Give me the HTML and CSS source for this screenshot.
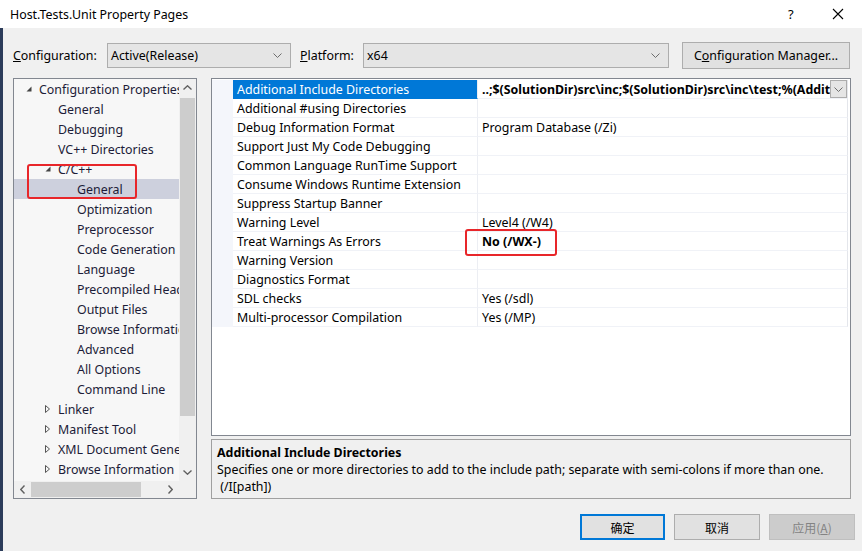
FILE: index.html
```html
<!DOCTYPE html>
<html>
<head>
<meta charset="utf-8">
<title>Host.Tests.Unit Property Pages</title>
<link rel="stylesheet" href="styles.css">
</head>
<body>
<div class="dialog">
  <div class="titlebar">
    <span class="title">Host.Tests.Unit Property Pages</span>
    <span class="tb-help">?</span>
    <span class="tb-close"><svg width="12" height="12" viewBox="0 0 12 12"><path d="M1 1L11 11M11 1L1 11" stroke="#000" stroke-width="1.1" fill="none"/></svg></span>
  </div>
  <div class="content">
    <div class="toolbar">
      <span class="lbl lbl-config"><u>C</u>onfiguration:</span>
      <div class="combo combo-config"><span>Active(Release)</span><svg class="chev" width="9" height="5" viewBox="0 0 9 5"><path d="M0.5 0.5L4.5 4.5L8.5 0.5" stroke="#6d6d6d" fill="none"/></svg></div>
      <span class="lbl lbl-platform"><u>P</u>latform:</span>
      <div class="combo combo-platform"><span>x64</span><svg class="chev" width="9" height="5" viewBox="0 0 9 5"><path d="M0.5 0.5L4.5 4.5L8.5 0.5" stroke="#6d6d6d" fill="none"/></svg></div>
      <div class="btn btn-manager">C<u>o</u>nfiguration Manager...</div>
    </div>
    <div class="main">
      <div class="tree">
        <div class="tree-items">
          <div class="ti l0"><span class="arr"><svg width="6" height="6" viewBox="0 0 6 6"><path d="M5.5 0.5V5.5H0.5Z" fill="#444"/></svg></span>Configuration Properties</div>
          <div class="ti l1"><span class="arr"></span>General</div>
          <div class="ti l1"><span class="arr"></span>Debugging</div>
          <div class="ti l1"><span class="arr"></span>VC++ Directories</div>
          <div class="ti l1"><span class="arr"><svg width="6" height="6" viewBox="0 0 6 6"><path d="M5.5 0.5V5.5H0.5Z" fill="#444"/></svg></span>C/C++</div>
          <div class="ti l2 sel"><span class="arr"></span>General</div>
          <div class="ti l2"><span class="arr"></span>Optimization</div>
          <div class="ti l2"><span class="arr"></span>Preprocessor</div>
          <div class="ti l2"><span class="arr"></span>Code Generation</div>
          <div class="ti l2"><span class="arr"></span>Language</div>
          <div class="ti l2"><span class="arr"></span>Precompiled Headers</div>
          <div class="ti l2"><span class="arr"></span>Output Files</div>
          <div class="ti l2"><span class="arr"></span>Browse Information</div>
          <div class="ti l2"><span class="arr"></span>Advanced</div>
          <div class="ti l2"><span class="arr"></span>All Options</div>
          <div class="ti l2"><span class="arr"></span>Command Line</div>
          <div class="ti l1"><span class="arr"><svg width="5" height="8" viewBox="0 0 5 8"><path d="M0.5 0.5L4.5 4L0.5 7.5Z" stroke="#555" fill="none"/></svg></span>Linker</div>
          <div class="ti l1"><span class="arr"><svg width="5" height="8" viewBox="0 0 5 8"><path d="M0.5 0.5L4.5 4L0.5 7.5Z" stroke="#555" fill="none"/></svg></span>Manifest Tool</div>
          <div class="ti l1"><span class="arr"><svg width="5" height="8" viewBox="0 0 5 8"><path d="M0.5 0.5L4.5 4L0.5 7.5Z" stroke="#555" fill="none"/></svg></span>XML Document Generator</div>
          <div class="ti l1"><span class="arr"><svg width="5" height="8" viewBox="0 0 5 8"><path d="M0.5 0.5L4.5 4L0.5 7.5Z" stroke="#555" fill="none"/></svg></span>Browse Information</div>
        </div>
        <div class="vscroll">
          <div class="sb-arrow"><svg width="9" height="5" viewBox="0 0 9 5"><path d="M0.5 4.5L4.5 0.8L8.5 4.5" stroke="#606060" stroke-width="1.4" fill="none"/></svg></div>
          <div class="vtrack"><div class="vthumb"></div></div>
          <div class="sb-arrow"><svg width="9" height="5" viewBox="0 0 9 5"><path d="M0.5 0.5L4.5 4.2L8.5 0.5" stroke="#606060" stroke-width="1.4" fill="none"/></svg></div>
        </div>
        <div class="hscroll">
          <div class="sb-arrow h"><svg width="5" height="9" viewBox="0 0 5 9"><path d="M4.5 0.5L0.8 4.5L4.5 8.5" stroke="#606060" stroke-width="1.4" fill="none"/></svg></div>
          <div class="htrack"><div class="hthumb"></div></div>
          <div class="sb-arrow h"><svg width="5" height="9" viewBox="0 0 5 9"><path d="M0.5 0.5L4.2 4.5L0.5 8.5" stroke="#606060" stroke-width="1.4" fill="none"/></svg></div>
        </div>
        <div class="corner"></div>
      </div>
      <div class="right">
        <div class="grid">
          <div class="row"><div class="cat"></div><div class="name selname">Additional Include Directories</div><div class="val bold first"><span class="valtext">..;$(SolutionDir)src\inc;$(SolutionDir)src\inc\test;%(AdditionalIncludeDirectories)</span><span class="ddbtn"><svg width="9" height="5" viewBox="0 0 9 5"><path d="M0.5 0.5L4.5 4.5L8.5 0.5" stroke="#6d6d6d" fill="none"/></svg></span></div></div>
          <div class="row"><div class="cat"></div><div class="name">Additional #using Directories</div><div class="val"></div></div>
          <div class="row"><div class="cat"></div><div class="name">Debug Information Format</div><div class="val">Program Database (/Zi)</div></div>
          <div class="row"><div class="cat"></div><div class="name">Support Just My Code Debugging</div><div class="val"></div></div>
          <div class="row"><div class="cat"></div><div class="name">Common Language RunTime Support</div><div class="val"></div></div>
          <div class="row"><div class="cat"></div><div class="name">Consume Windows Runtime Extension</div><div class="val"></div></div>
          <div class="row"><div class="cat"></div><div class="name">Suppress Startup Banner</div><div class="val"></div></div>
          <div class="row"><div class="cat"></div><div class="name">Warning Level</div><div class="val">Level4 (/W4)</div></div>
          <div class="row"><div class="cat"></div><div class="name">Treat Warnings As Errors</div><div class="val bold">No (/WX-)</div></div>
          <div class="row"><div class="cat"></div><div class="name">Warning Version</div><div class="val"></div></div>
          <div class="row"><div class="cat"></div><div class="name">Diagnostics Format</div><div class="val"></div></div>
          <div class="row"><div class="cat"></div><div class="name">SDL checks</div><div class="val">Yes (/sdl)</div></div>
          <div class="row"><div class="cat"></div><div class="name">Multi-processor Compilation</div><div class="val">Yes (/MP)</div></div>
        </div>
        <div class="desc">
          <div class="desc-title">Additional Include Directories</div>
          <div class="desc-text">Specifies one or more directories to add to the include path; separate with semi-colons if more than one.</div>
          <div class="desc-text">&nbsp;(/I[path])</div>
        </div>
      </div>
    </div>
    <div class="footer">
      <div class="btn fbtn default">确定</div>
      <div class="btn fbtn">取消</div>
      <div class="btn fbtn disabled">应用(<u>A</u>)</div>
    </div>
  </div>
  <div class="mark mark-tree"></div>
  <div class="mark mark-val"></div>
</div>
</body>
</html>
```
FILE: styles.css
```css
html, body {
  margin: 0;
  padding: 0;
}
body {
  width: 862px;
  height: 551px;
  overflow: hidden;
  background: #f0f0f0;
  font-family: "Noto Sans", "Noto Sans CJK SC", sans-serif;
  font-size: 12.4px;
  color: #000;
}
.dialog {
  position: relative;
  width: 862px;
  height: 551px;
}
.titlebar {
  height: 28px;
  background: #fff;
  display: flex;
  align-items: center;
  padding-left: 10px;
  box-sizing: border-box;
}
.title {
  flex: 1;
}
.tb-help {
  width: 14px;
  margin-right: 30px;
  font-size: 13px;
}
.tb-close {
  display: flex;
  margin-right: 18px;
}
.content {
  border-left: 3px solid #2c3c5a;
  height: 523px;
  box-sizing: border-box;
  padding: 14px 0 0 10px;
}
.toolbar {
  display: flex;
  align-items: center;
  height: 27px;
}
.lbl {
  white-space: nowrap;
}
.lbl-config { width: 94px; }
.lbl-platform { width: 63px; margin-left: 9px; }
.combo {
  height: 25px;
  box-sizing: border-box;
  border: 1px solid #adadad;
  background: #e5e5e5;
  display: flex;
  align-items: center;
  padding: 0 8px 0 3px;
}
.combo span { flex: 1; }
.combo-config { width: 184px; }
.combo-platform { width: 306px; }
.btn {
  box-sizing: border-box;
  border: 1px solid #adadad;
  background: #e1e1e1;
  display: flex;
  align-items: center;
  justify-content: center;
}
.btn-manager {
  width: 168px;
  height: 27px;
  margin-left: 13px;
}
.main {
  display: flex;
  margin-top: 9px;
  gap: 14px;
}
.tree {
  width: 184px;
  height: 421px;
  box-sizing: border-box;
  border: 1px solid #828790;
  background: #f7f7f7;
  display: grid;
  grid-template-columns: 1fr 17px;
  grid-template-rows: 1fr 17px;
}
.tree-items {
  overflow: hidden;
  color: #1c1c38;
}
.ti {
  height: 20px;
  display: flex;
  align-items: center;
  white-space: nowrap;
}
.ti.sel { background: #cdd0dd; }
.arr {
  width: 13px;
  flex: none;
  display: flex;
  align-items: center;
}
.l0 { padding-left: 12px; }
.l1 { padding-left: 31px; }
.l2 { padding-left: 50px; }
.vscroll {
  background: #f0f0f0;
  display: flex;
  flex-direction: column;
}
.sb-arrow {
  height: 17px;
  flex: none;
  display: flex;
  align-items: center;
  justify-content: center;
}
.sb-arrow.h {
  width: 17px;
  height: auto;
}
.vtrack {
  flex: 1;
  padding-top: 2px;
}
.vthumb {
  margin: 0 1px;
  height: 318px;
  background: #cdcdcd;
}
.hscroll {
  background: #f0f0f0;
  display: flex;
}
.htrack {
  flex: 1;
  padding-top: 1px;
  padding-bottom: 1px;
}
.hthumb {
  width: 110px;
  height: 100%;
  background: #cdcdcd;
}
.corner { background: #f0f0f0; }
.right {
  width: 640px;
  display: flex;
  flex-direction: column;
  gap: 3px;
}
.grid {
  height: 358px;
  box-sizing: border-box;
  border: 1px solid #828790;
  background: #fff;
  padding-top: 1px;
}
.row {
  display: flex;
  height: 19px;
}
.cat {
  width: 21px;
  flex: none;
  background: #f4f6fb;
}
.name {
  width: 245px;
  flex: none;
  box-sizing: border-box;
  padding-left: 4px;
  border-bottom: 1px solid #f0f2f7;
  border-right: 1px solid #eceef3;
  display: flex;
  align-items: center;
  white-space: nowrap;
}
.name.selname {
  background: #0078d7;
  color: #fff;
  border-bottom-color: #0078d7;
}
.val {
  flex: 1;
  min-width: 0;
  box-sizing: border-box;
  padding-left: 4px;
  border-bottom: 1px solid #f0f2f7;
  border-right: 1px solid #e4e6eb;
  margin-right: 2px;
  display: flex;
  align-items: center;
  white-space: nowrap;
  overflow: hidden;
}
.val.bold { font-weight: bold; }
.valtext {
  flex: 1;
  min-width: 0;
  overflow: hidden;
}
.ddbtn {
  width: 17px;
  height: 18px;
  flex: none;
  box-sizing: border-box;
  border: 1px solid #adadad;
  background: #e5e5e5;
  display: flex;
  align-items: center;
  justify-content: center;
}
.desc {
  height: 60px;
  box-sizing: border-box;
  border: 1px solid #a0a0a0;
  padding: 4px 0 0 5px;
  line-height: 17px;
}
.desc-title { font-weight: bold; }
.footer {
  display: flex;
  justify-content: flex-end;
  width: 842px;
  margin-top: 15px;
}
.fbtn {
  width: 86px;
  height: 26px;
  margin-left: 9px;
  font-family: "Noto Sans CJK SC", sans-serif;
  font-size: 12px;
}
.fbtn.default {
  width: 85px;
  border: 2px solid #0078d7;
}
.fbtn.disabled {
  background: #cccccc;
  border-color: #bfbfbf;
  color: #838383;
}
.mark {
  position: absolute;
  border: 2px solid #e8262a;
  border-radius: 3px;
  box-sizing: border-box;
}
.mark-tree {
  left: 27px;
  top: 164px;
  width: 110px;
  height: 35px;
}
.mark-val {
  left: 465px;
  top: 229px;
  width: 92px;
  height: 27px;
}
```
